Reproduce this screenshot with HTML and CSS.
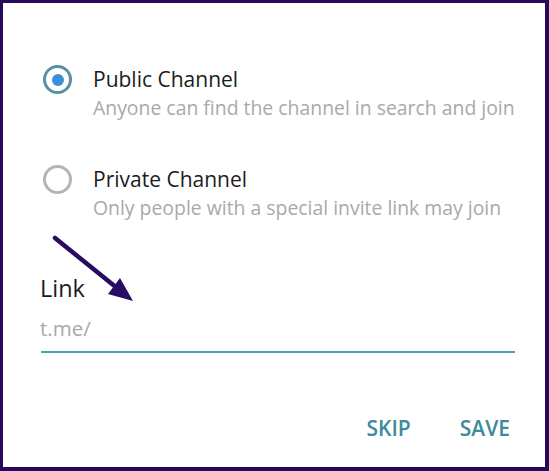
FILE: index.html
```html
<!DOCTYPE html>
<html>
<head>
<meta charset="utf-8">
<link rel="stylesheet" href="styles.css">
</head>
<body>
<div class="frame">
  <div class="dialog">
    <div class="option first">
      <span class="radio checked"><span class="dot"></span></span>
      <div class="option-text">
        <div class="title">Public Channel</div>
        <div class="sub">Anyone can find the channel in search and join</div>
      </div>
    </div>
    <div class="option second">
      <span class="radio"></span>
      <div class="option-text">
        <div class="title">Private Channel</div>
        <div class="sub">Only people with a special invite link may join</div>
      </div>
    </div>
    <div class="link-block">
      <div class="link-label">Link</div>
      <div class="link-input"><span class="placeholder">t.me/</span></div>
    </div>
    <div class="actions">
      <span class="btn">SKIP</span>
      <span class="btn">SAVE</span>
    </div>
    <svg class="arrow" width="549" height="471" viewBox="0 0 549 471">
      <line x1="55" y1="238" x2="117" y2="288" stroke="#2a0b62" stroke-width="4.5" stroke-linecap="round"/>
      <polygon points="133,301 108,294 120,278" fill="#2a0b62"/>
    </svg>
  </div>
</div>
</body>
</html>
```

FILE: styles.css
```css
html, body {
  margin: 0;
  padding: 0;
  background: #26095a;
}
.frame {
  width: 549px;
  height: 471px;
  box-sizing: border-box;
  border-style: solid;
  border-color: #26095a;
  border-width: 3px 4px 4px 3px;
  background: #ffffff;
}
.dialog {
  position: relative;
  height: 100%;
  font-family: "Open Sans", "Liberation Sans", sans-serif;
  padding: 63px 0 0 40px;
  box-sizing: border-box;
}
.option {
  display: flex;
  align-items: flex-start;
}
.option.second {
  margin-top: 45px;
}
.radio {
  width: 23px;
  height: 23px;
  border: 3px solid #b4b4b4;
  border-radius: 50%;
  display: flex;
  align-items: center;
  justify-content: center;
  flex: none;
  margin-top: -1px;
}
.radio.checked {
  border-color: #5a90a3;
}
.dot {
  width: 12px;
  height: 12px;
  border-radius: 50%;
  background: #3d90d8;
}
.option-text {
  margin-left: 21px;
}
.title {
  font-size: 21px;
  line-height: 26px;
  color: #1c1c1c;
  margin-bottom: 3px;
}
.sub {
  font-size: 19.4px;
  line-height: 26px;
  color: #a9a9a9;
}
.link-block {
  margin-top: 52px;
  margin-right: 30px;
  margin-left: -2px;
}
.link-label {
  font-size: 23.5px;
  line-height: 30px;
  color: #1c1c1c;
  margin-left: -1px;
}
.link-input {
  margin-top: 12px;
  font-size: 20.5px;
  line-height: 26px;
  color: #a9a9a9;
  padding-bottom: 10px;
  border-bottom: 2.5px solid #4e9fad;
}
.placeholder {
  margin-left: -1px;
}
.actions {
  display: flex;
  justify-content: flex-end;
  gap: 49px;
  margin-top: 61px;
  margin-right: 35px;
}
.btn {
  font-size: 21px;
  line-height: 28px;
  font-weight: 600;
  color: #3e8a9c;
}
.arrow {
  position: absolute;
  left: -3px;
  top: -3px;
  pointer-events: none;
}
```
